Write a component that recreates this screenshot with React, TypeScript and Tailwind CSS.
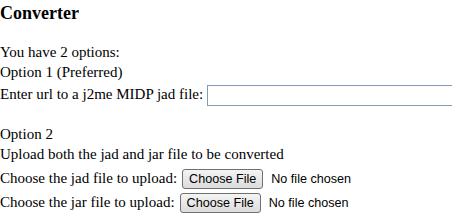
import React from "react";

const FileRow: React.FC<{ label: string }> = ({ label }) => {
  // fake file input so the button looks the same everywhere
  return (
    <div className="flex items-start h-[24px] whitespace-nowrap">
      <span className="leading-[20px]">{label}</span>
      <button
        type="button"
        className="ml-[5px] mt-[1px] h-[20px] px-[6px] rounded-[3px] border border-[#707070] bg-gradient-to-b from-[#f4f4f4] to-[#dcdcdc] text-[12.6px] leading-[18px] text-black font-['Liberation_Sans',Arial,sans-serif]"
      >
        Choose File
      </button>
      <span className="ml-[8px] mt-[1px] leading-[20px] text-[12.6px] font-['Liberation_Sans',Arial,sans-serif]">
        No file chosen
      </span>
    </div>
  );
};

export default function App() {
  return (
    <div className="w-[452px] h-[222px] overflow-hidden bg-white text-black font-['Liberation_Serif','Times_New_Roman',serif] text-[15px] pt-[3px]">
      <h3 className="text-[18px] font-bold leading-[20px]">Converter</h3>

      <div className="mt-[19px] leading-[20px]">You have 2 options:</div>
      <div className="leading-[20px]">Option 1 (Preferred)</div>
      <div className="flex items-start h-[24px] whitespace-nowrap">
        <span className="mt-[2px] leading-[20px]">Enter url to a j2me MIDP jad file:</span>
        <input
          type="text"
          className="ml-[4px] mt-[3px] h-[21px] w-[260px] shrink-0 border border-[#7f9db9] bg-white px-[2px] text-[13px] outline-none"
        />
      </div>

      <div className="mt-[18px] leading-[20px]">Option 2</div>
      <div className="leading-[20px]">Upload both the jad and jar file to be converted</div>
      <div className="mt-[4px]">
        <FileRow label="Choose the jad file to upload:" />
        <FileRow label="Choose the jar file to upload:" />
      </div>
    </div>
  );
}
